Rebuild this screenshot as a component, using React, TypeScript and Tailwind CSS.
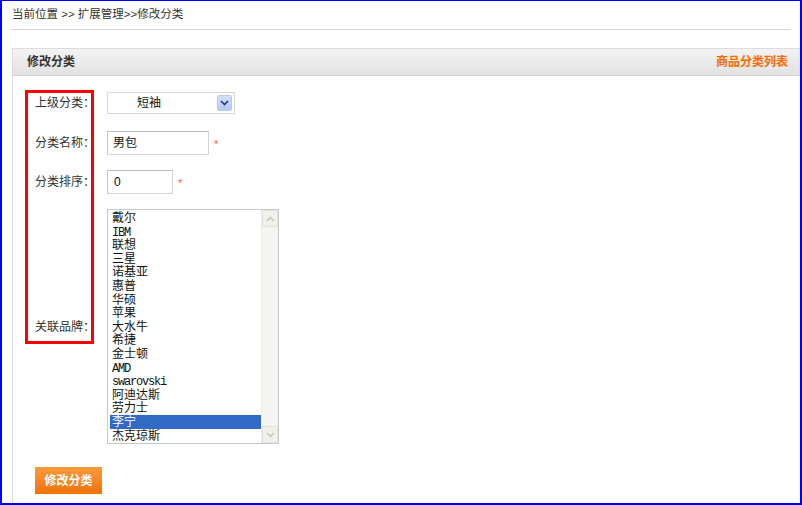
import { FC, ReactNode } from "react"

const brands = [
  "戴尔",
  "IBM",
  "联想",
  "三星",
  "诺基亚",
  "惠普",
  "华硕",
  "苹果",
  "大水牛",
  "希捷",
  "金士顿",
  "AMD",
  "swarovski",
  "阿迪达斯",
  "劳力士",
  "李宁",
  "杰克琼斯",
]

const isLatin = (s: string) => /^[A-Za-z]+$/.test(s)

const Chevron: FC<{ up?: boolean; className?: string }> = ({ up, className }) => (
  <svg width="9" height="6" viewBox="0 0 9 6" className={className}>
    <path
      d={up ? "M1 5 L4.5 1.5 L8 5" : "M1 1 L4.5 4.5 L8 1"}
      fill="none"
      stroke="currentColor"
      strokeWidth="1.6"
    />
  </svg>
)

const Required = () => <span className="ml-[5px] text-[11px] leading-none text-[#f55] pt-[2px]">*</span>

const Row: FC<{ label: string; className?: string; children: ReactNode }> = ({ label, className, children }) => (
  <div className={`flex items-center ${className ?? ""}`}>
    <div className="w-[72px] shrink-0 text-[12px] text-[#333]">{label}</div>
    {children}
  </div>
)

const BrandList = () => (
  <div className="flex w-[172px] h-[235px] border border-[#c8c8c8] bg-white">
    <div className="flex-1 pl-[2px] pt-[1px] font-['Liberation_Mono','Noto_Sans_CJK_SC',monospace] text-[12px] leading-[16px] text-[#111]">
      {brands.map((b) => (
        <div
          key={b}
          className={`pl-[2px] h-[13.6px] whitespace-nowrap ${b === "李宁" ? "bg-[#316ac5] text-white" : ""} ${
            isLatin(b) ? "tracking-[-1.2px]" : ""
          }`}
        >
          {b}
        </div>
      ))}
    </div>
    <div className="w-[17px] flex flex-col justify-between bg-[#f5f5f1] border-l border-[#ececec]">
      <div className="h-[17px] flex items-center justify-center bg-[#f1f1ec] border border-[#e3e3dc] text-[#c8c8c0]">
        <Chevron up />
      </div>
      <div className="h-[17px] flex items-center justify-center bg-[#f1f1ec] border border-[#e3e3dc] text-[#c8c8c0]">
        <Chevron />
      </div>
    </div>
  </div>
)

const App = () => {
  return (
    <div className="relative w-[802px] h-[505px] overflow-hidden bg-white border-l-2 border-t border-r-2 border-b-2 border-[#0000ff] font-['Liberation_Sans','Noto_Sans_CJK_SC',sans-serif] text-[12px] text-[#333]">
      {/* breadcrumb */}
      <div className="mx-[9px] h-[29px] pt-[5px] pl-[1px] leading-[16px] border-b border-[#d6d6d6] text-[11.5px] text-[#333]">
        当前位置 &gt;&gt; 扩展管理&gt;&gt;修改分类
      </div>

      <div className="mt-[18px] ml-[10px] h-[460px] border-l border-t border-[#dcdcdc]">
        <div className="h-[27px] flex items-center justify-between pl-[14px] pr-[12px] bg-gradient-to-b from-[#f3f3f3] to-[#e2e2e2] border-b border-[#d6d6d6] font-bold">
          <span className="text-[#333]">修改分类</span>
          <span className="text-[#ff6a00]">商品分类列表</span>
        </div>

        <div className="pl-[22px] pt-[16px]">
          <Row label="上级分类：" className="h-[22px]">
            <div className="flex items-center w-[128px] h-[22px] border border-[#d8d8d8] bg-white pl-[29px] pr-[2px]">
              <span className="flex-1 text-[12px] text-[#111]">短袖</span>
              <span className="w-[15px] h-[16px] flex items-center justify-center rounded-[2px] bg-gradient-to-b from-[#d3e0fa] to-[#b5c9f3] border border-[#b9c9ec] text-[#25387a]">
                <Chevron />
              </span>
            </div>
          </Row>

          <Row label="分类名称：" className="mt-[17px] h-[24px]">
            <div className="w-[102px] h-[24px] border border-[#d4d4d4] border-t-[#bdbdbd] border-l-[#c6c6c6] pl-[5px] flex items-center text-[12px] text-[#111]">
              男包
            </div>
            <Required />
          </Row>

          <Row label="分类排序：" className="mt-[15px] h-[24px]">
            <div className="w-[66px] h-[24px] border border-[#d4d4d4] border-t-[#bdbdbd] border-l-[#c6c6c6] pl-[6px] flex items-center text-[12px] text-[#111]">
              0
            </div>
            <Required />
          </Row>

          <Row label="关联品牌：" className="mt-[15px]">
            <BrandList />
          </Row>

          <button className="mt-[23px] w-[67px] h-[27px] bg-gradient-to-b from-[#fb9a3c] to-[#f27100] text-white font-bold text-[12px]">
            修改分类
          </button>
        </div>
      </div>

      {/* red annotation frame over the labels */}
      <div className="absolute left-[23px] top-[89px] w-[69px] h-[254px] border-[3px] border-[#ff0000] pointer-events-none" />
    </div>
  )
}

export default App
